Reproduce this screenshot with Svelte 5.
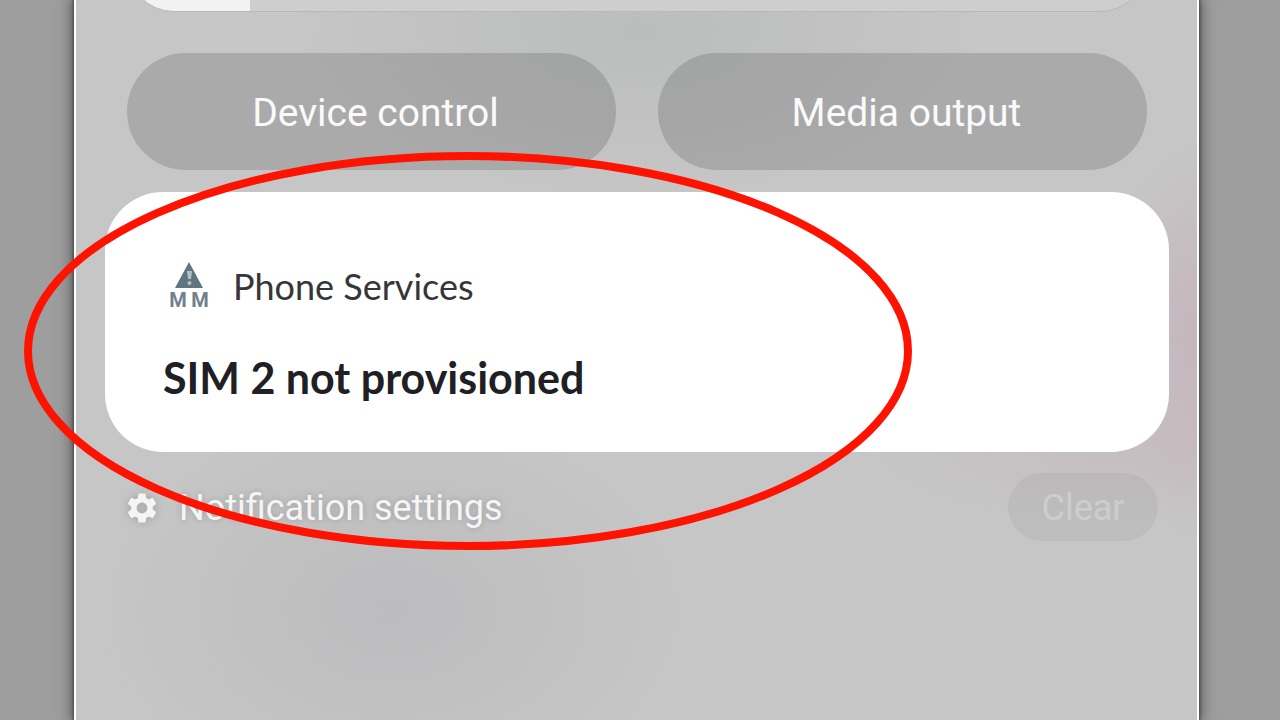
<script>
  let brightness = $state(12);
</script>

<div class="page">
  <main class="panel">
    <input
      class="brightness"
      type="range"
      min="0"
      max="100"
      aria-label="Brightness"
      bind:value={brightness}
      style="--level: {brightness}%"
    />

    <div class="actions">
      <button type="button">Device control</button>
      <button type="button">Media output</button>
    </div>

    <article class="card">
      <header>
        <svg class="warn" viewBox="-2 0 44 54" aria-hidden="true">
          <path d="M20 3 34 29H6Z" fill="#5f7580" />
          <path d="M18 12h5l-1 8h-3z" fill="#b4c1c7" />
          <circle cx="20.5" cy="24" r="2" fill="#b4c1c7" />
          <text x="9" y="48">M</text>
          <text x="31" y="48">M</text>
        </svg>
        <span>Phone Services</span>
      </header>
      <h1>SIM 2 not provisioned</h1>
    </article>

    <footer>
      <button type="button" class="settings">
        <svg viewBox="2 2 20 20" aria-hidden="true">
          <path
            fill="currentColor"
            d="M19.14 12.94c.04-.3.06-.61.06-.94 0-.32-.02-.64-.07-.94l2.03-1.58c.18-.14.23-.41.12-.61l-1.92-3.32c-.12-.22-.37-.29-.59-.22l-2.39.96c-.5-.38-1.03-.7-1.62-.94l-.36-2.54c-.04-.24-.24-.41-.48-.41h-3.84c-.24 0-.43.17-.47.41l-.36 2.54c-.59.24-1.13.57-1.62.94l-2.39-.96c-.22-.08-.47 0-.59.22L2.74 8.87c-.12.21-.08.47.12.61l2.03 1.58c-.05.3-.09.63-.09.94s.02.64.07.94l-2.03 1.58c-.18.14-.23.41-.12.61l1.92 3.32c.12.22.37.29.59.22l2.39-.96c.5.38 1.03.7 1.62.94l.36 2.54c.05.24.24.41.48.41h3.84c.24 0 .44-.17.47-.41l.36-2.54c.59-.24 1.13-.56 1.62-.94l2.39.96c.22.08.47 0 .59-.22l1.92-3.32c.12-.22.07-.47-.12-.61l-2.01-1.58zM12 15.6c-1.98 0-3.6-1.62-3.6-3.6s1.62-3.6 3.6-3.6 3.6 1.62 3.6 3.6-1.62 3.6-3.6 3.6z"
          />
        </svg>
        <span>Notification settings</span>
      </button>
      <button type="button" class="clear">Clear</button>
    </footer>
  </main>

  <svg class="ring" viewBox="0 0 890 400" aria-hidden="true">
    <ellipse cx="445" cy="200" rx="440" ry="195" fill="none" stroke="#fe1300" stroke-width="8" />
  </svg>
</div>

<style>
  :global(body) {
    margin: 0;
    background: #9e9e9e;
  }

  .page {
    position: relative;
    display: flex;
    min-height: 100vh;
    box-sizing: border-box;
    padding: 0 81px 0 74px;
    overflow: hidden;
    font-family: Roboto, "Liberation Sans", sans-serif;
  }

  .panel {
    flex: 1;
    min-width: 0;
    box-sizing: border-box;
    border: solid #fff;
    border-width: 0 2px;
    padding: 0 28px 0 29px;
    background:
      radial-gradient(ellipse 90px 200px at 100% 340px, #c5b5bc 0%, #c5b5bc00 100%),
      radial-gradient(ellipse 240px 70px at 92% 450px, #c6bec1 0%, #c6bec100 100%),
      radial-gradient(ellipse 340px 170px at 50% 30px, #bbbcbc 0%, #bbbcbc00 100%),
      radial-gradient(ellipse 300px 200px at 28% 610px, #bcbcbe 0%, #bcbcbe00 100%),
      #c6c6c6;
    box-shadow:
      0 0 3px 1px #444,
      0 0 14px 2px #555;
  }

  button {
    border: 0;
    padding: 0;
    font: inherit;
    cursor: pointer;
  }

  .brightness {
    appearance: none;
    display: block;
    box-sizing: border-box;
    width: calc(100% - 44px);
    height: 94px;
    margin: -82px 22px 41px;
    border: 1px solid #b9b9b9;
    border-radius: 47px;
    background: linear-gradient(to right, #f2f2f2 var(--level), #cececd var(--level));
  }

  .brightness::-webkit-slider-thumb {
    appearance: none;
    width: 1px;
    height: 94px;
  }

  .actions {
    display: grid;
    grid-template-columns: 1fr 1fr;
    gap: 42px;
    margin: 0 22px 22px;
  }

  .actions button {
    height: 117px;
    padding: 2px 0 0 8px;
    border-radius: 59px;
    background: #00000024;
    color: #fafafa;
    font-size: 39px;
  }

  .card {
    padding: 70px 58px 48px;
    border-radius: 58px;
    background: #fff;
    font-family: Lato, sans-serif;
  }

  .card header {
    display: flex;
    align-items: center;
    gap: 22px;
    height: 48px;
    color: #363638;
    font-size: 36px;
  }

  .warn {
    width: 44px;
    height: 54px;
    margin-left: 4px;
  }

  .warn text {
    fill: #71808a;
    font-family: Roboto, sans-serif;
    font-size: 20px;
    font-weight: 700;
    text-anchor: middle;
  }

  h1 {
    margin: 42px 0 0;
    color: #202024;
    font-size: 43px;
    font-weight: 700;
    line-height: 52px;
  }

  footer {
    display: flex;
    align-items: center;
    justify-content: space-between;
    margin: 21px 11px 0 22px;
    font-size: 36px;
  }

  .settings {
    display: flex;
    align-items: center;
    gap: 22px;
    padding-top: 2px;
    background: none;
    color: #f5f5f5;
    text-shadow: 0 0 6px #00000030;
  }

  .settings svg {
    width: 30px;
    height: 30px;
    filter: drop-shadow(0 0 4px #00000030);
  }

  .clear {
    width: 150px;
    height: 68px;
    padding-top: 2px;
    border-radius: 34px;
    background: #0000000b;
    color: #cdcdcf;
  }

  .ring {
    position: absolute;
    left: 23px;
    top: 151px;
    width: 890px;
    height: 400px;
    pointer-events: none;
  }
</style>
